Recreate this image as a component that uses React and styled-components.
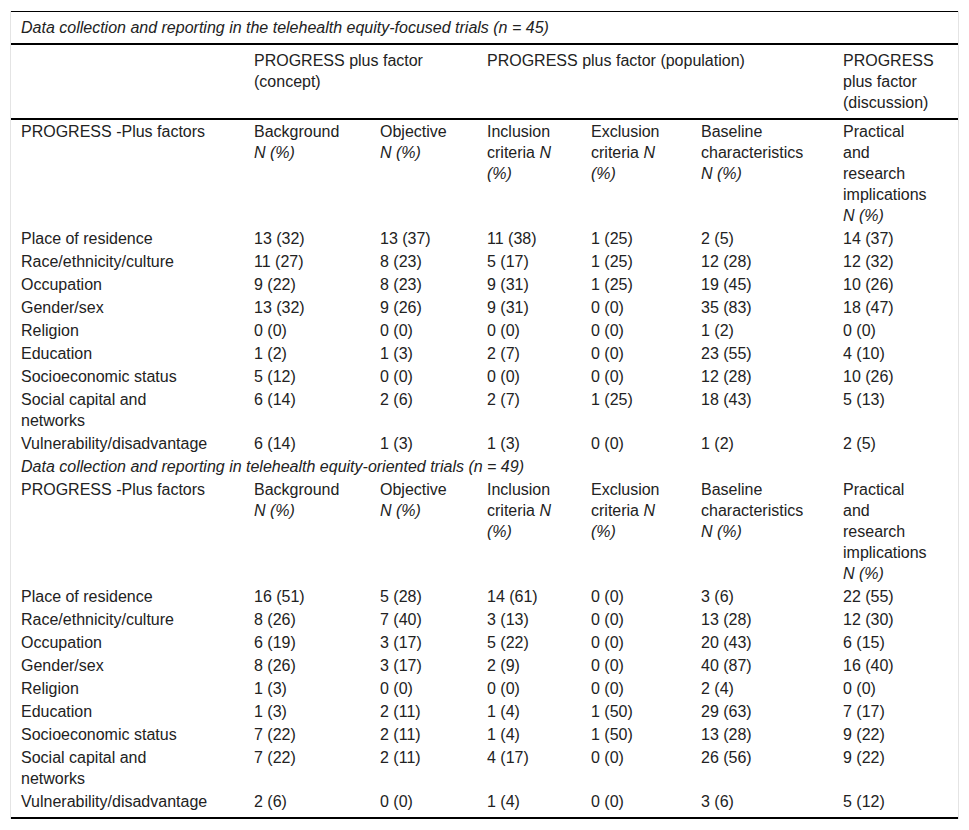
import React from 'react'
import styled, { createGlobalStyle } from 'styled-components'

const Global = createGlobalStyle`
body{
    margin: 0;
    background: #fff;
    font-family: 'Liberation Sans', Arial, sans-serif;
}
`
const Page = styled.div`
padding: 11px 10px 0 10px;
`
const Frame = styled.div`
width: 947px;
border-left: 1px solid #e4e4e4;
border-right: 1px solid #e4e4e4;
`
const Table = styled.table`
width: 947px;
table-layout: fixed;
border-collapse: collapse;
font-size: 16px;
line-height: 21px;
color: #222;
border-top: 1px solid #000;
border-bottom: 2px solid #000;
`
const Caption = styled.td`
padding: ${p => p.$head ? '5px 10px' : '1px 10px'};
font-style: italic;
border-bottom: ${p => p.$head ? '2px solid #000' : 'none'};
`
const HeadRow = styled.tr`
border-bottom: 2px solid #000;
th{
    font-weight: normal;
    text-align: left;
    vertical-align: top;
    padding: 5px 23.5px 5px 10px;
}
`
const Row = styled.tr`
td{
    vertical-align: top;
    padding: 1px 22px ${p => p.$end ? '5px' : '1px'} 10px;
}
td:first-child{
    padding-right: 33px;
}
td:last-child{
    padding-right: 23.5px;
}
`
const Em = styled.i`
font-style: italic;
`

const widths = [233, 126, 107, 104, 110, 142, 125]

const labels = [
    'Place of residence',
    'Race/ethnicity/culture',
    'Occupation',
    'Gender/sex',
    'Religion',
    'Education',
    'Socioeconomic status',
    'Social capital and networks',
    'Vulnerability/disadvantage',
]

const focused = [
    ['13 (32)', '13 (37)', '11 (38)', '1 (25)', '2 (5)', '14 (37)'],
    ['11 (27)', '8 (23)', '5 (17)', '1 (25)', '12 (28)', '12 (32)'],
    ['9 (22)', '8 (23)', '9 (31)', '1 (25)', '19 (45)', '10 (26)'],
    ['13 (32)', '9 (26)', '9 (31)', '0 (0)', '35 (83)', '18 (47)'],
    ['0 (0)', '0 (0)', '0 (0)', '0 (0)', '1 (2)', '0 (0)'],
    ['1 (2)', '1 (3)', '2 (7)', '0 (0)', '23 (55)', '4 (10)'],
    ['5 (12)', '0 (0)', '0 (0)', '0 (0)', '12 (28)', '10 (26)'],
    ['6 (14)', '2 (6)', '2 (7)', '1 (25)', '18 (43)', '5 (13)'],
    ['6 (14)', '1 (3)', '1 (3)', '0 (0)', '1 (2)', '2 (5)'],
]

const oriented = [
    ['16 (51)', '5 (28)', '14 (61)', '0 (0)', '3 (6)', '22 (55)'],
    ['8 (26)', '7 (40)', '3 (13)', '0 (0)', '13 (28)', '12 (30)'],
    ['6 (19)', '3 (17)', '5 (22)', '0 (0)', '20 (43)', '6 (15)'],
    ['8 (26)', '3 (17)', '2 (9)', '0 (0)', '40 (87)', '16 (40)'],
    ['1 (3)', '0 (0)', '0 (0)', '0 (0)', '2 (4)', '0 (0)'],
    ['1 (3)', '2 (11)', '1 (4)', '1 (50)', '29 (63)', '7 (17)'],
    ['7 (22)', '2 (11)', '1 (4)', '1 (50)', '13 (28)', '9 (22)'],
    ['7 (22)', '2 (11)', '4 (17)', '0 (0)', '26 (56)', '9 (22)'],
    ['2 (6)', '0 (0)', '1 (4)', '0 (0)', '3 (6)', '5 (12)'],
]

const FactorRow = () => (
    <Row>
        <td>PROGRESS -Plus factors</td>
        <td>Background <Em>N (%)</Em></td>
        <td>Objective <Em>N (%)</Em></td>
        <td>Inclusion criteria <Em>N (%)</Em></td>
        <td>Exclusion criteria <Em>N (%)</Em></td>
        <td>Baseline characteristics <Em>N (%)</Em></td>
        <td>Practical and research implications <Em>N (%)</Em></td>
    </Row>
)

const DataRows = ({ rows, last }) => rows.map((r, i) => (
    <Row key={labels[i]} $end={last && i === rows.length - 1}>
        <td>{labels[i]}</td>
        {r.map((v, j) => <td key={j}>{v}</td>)}
    </Row>
))

const App = () => {
    return (
        <>
            <Global />
            <Page>
                <Frame>
                    <Table>
                        <colgroup>
                            {widths.map((w, i) => <col key={i} style={{ width: w }} />)}
                        </colgroup>
                        <thead>
                            <tr>
                                <Caption $head colSpan={7}>Data collection and reporting in the telehealth equity-focused trials (n = 45)</Caption>
                            </tr>
                            <HeadRow>
                                <th></th>
                                <th colSpan={2}>PROGRESS plus factor (concept)</th>
                                <th colSpan={3}>PROGRESS plus factor (population)</th>
                                <th>PROGRESS plus factor (discussion)</th>
                            </HeadRow>
                        </thead>
                        <tbody>
                            <FactorRow />
                            <DataRows rows={focused} />
                            <tr>
                                <Caption colSpan={7}>Data collection and reporting in telehealth equity-oriented trials (n = 49)</Caption>
                            </tr>
                            <FactorRow />
                            <DataRows rows={oriented} last />
                        </tbody>
                    </Table>
                </Frame>
            </Page>
        </>
    )
}

export default App
